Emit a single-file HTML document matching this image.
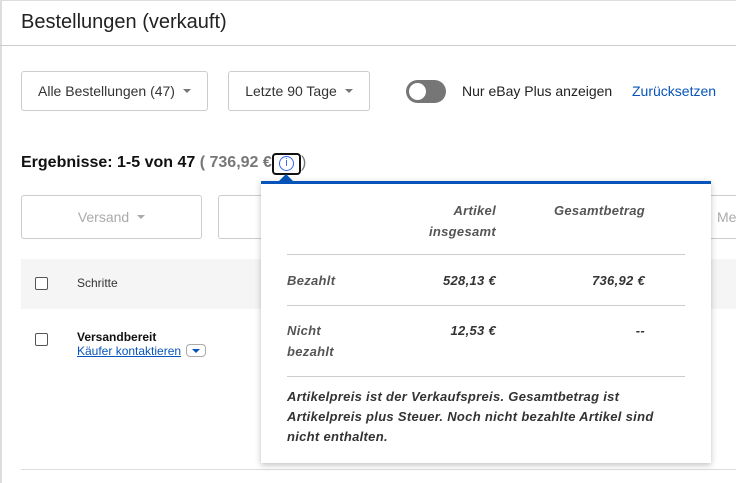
<!DOCTYPE html>
<html><head><meta charset="utf-8"><style>
*{box-sizing:border-box;margin:0;padding:0}
body{width:736px;height:483px;overflow:hidden;background:#fff;font-family:"Liberation Sans",Arial,sans-serif;color:#111;position:relative}
.a{position:absolute}
.btn{position:absolute;border:1px solid #ccc;border-radius:3px;background:#fff;font-size:14px;color:#333;display:flex;align-items:center;justify-content:center}
.car{display:inline-block;width:0;height:0;border-left:4px solid transparent;border-right:4px solid transparent;border-top:4px solid #777;margin-left:8px}
.cb{position:absolute;width:13px;height:13px;border:1px solid #555;border-radius:2px;background:#fff}
.pop{position:absolute;left:261px;top:181px;width:450px;height:282px;background:#fff;border-top:3px solid #0654ba;box-shadow:0 2px 6px rgba(0,0,0,.25)}
.pop .t{position:absolute;font-style:italic;font-weight:bold;font-size:13px;color:#555;line-height:21px;letter-spacing:0.3px}
.pop .d{color:#333}
.hr{position:absolute;left:26px;width:398px;height:1px;background:#ccc}
</style></head><body>
<div class="a" style="left:0;top:0;width:736px;height:1px;background:#ddd"></div>
<div class="a" style="left:0;top:0;width:2px;height:483px;background:#ddd"></div>
<div class="a" style="left:21px;top:11px;font-size:20px;color:#222">Bestellungen (verkauft)</div>
<div class="a" style="left:0;top:45px;width:736px;height:1px;background:#ccc"></div>
<div class="btn" style="left:21px;top:71px;width:187px;height:40px">Alle Bestellungen (47)<span class="car"></span></div>
<div class="btn" style="left:228px;top:71px;width:142px;height:40px">Letzte 90 Tage<span class="car"></span></div>
<div class="a" style="left:406px;top:80px;width:40px;height:23px;border-radius:12px;background:#767676"></div>
<div class="a" style="left:409px;top:83px;width:17px;height:17px;border-radius:50%;background:#fff"></div>
<div class="a" style="left:462px;top:83px;font-size:14px;color:#222">Nur eBay Plus anzeigen</div>
<div class="a" style="left:632px;top:83px;font-size:14px;color:#0654ba">Zurücksetzen</div>
<div class="a" style="left:21px;top:154px;font-size:16px;font-weight:bold;color:#111;white-space:nowrap">Ergebnisse: 1-5 von 47 <span style="color:#777">( 736,92 €</span></div>
<div class="a" style="left:272px;top:153px;width:29px;height:22px;border:2px solid #111;border-radius:4px;background:#fff"></div>
<div class="a" style="left:279px;top:156px;width:15px;height:15px;border:1px solid #3665f3;border-radius:50%;color:#3665f3;font-size:11px;text-align:center;line-height:13px">i</div>
<div class="a" style="left:301px;top:154px;font-size:16px;color:#777">)</div>
<div class="a" style="left:278px;top:174px;width:0;height:0;border-left:8px solid transparent;border-right:8px solid transparent;border-bottom:8px solid #0654ba"></div>
<div class="btn" style="left:21px;top:195px;width:181px;height:44px;color:#aaa">Versand<span class="car" style="border-top-color:#aaa"></span></div>
<div class="btn" style="left:218px;top:195px;width:100px;height:44px"></div>
<div class="btn" style="left:700px;top:195px;width:60px;height:44px;color:#aaa;justify-content:flex-start;padding-left:16px">Me</div>
<div class="a" style="left:21px;top:259px;width:715px;height:50px;background:#f5f5f5"></div>
<div class="cb" style="left:35px;top:277px"></div>
<div class="a" style="left:77px;top:276px;font-size:12px;color:#333">Schritte</div>
<div class="cb" style="left:35px;top:333px"></div>
<div class="a" style="left:77px;top:330px;font-size:12px;font-weight:bold">Versandbereit</div>
<div class="a" style="left:77px;top:344px;font-size:12px;color:#0654ba;text-decoration:underline">Käufer kontaktieren</div>
<div class="a" style="left:186px;top:344px;width:20px;height:13px;border:1px solid #aaa;border-radius:4px"></div>
<div class="a" style="left:192px;top:349px;width:0;height:0;border-left:4px solid transparent;border-right:4px solid transparent;border-top:4px solid #0654ba"></div>
<div class="a" style="left:21px;top:469px;width:715px;height:1px;background:#ddd"></div>
<div class="pop">
<div class="t" style="left:140px;width:95px;text-align:right;top:16px">Artikel<br>insgesamt</div>
<div class="t" style="left:260px;width:124px;text-align:right;top:16px">Gesamtbetrag</div>
<div class="hr" style="top:70px"></div>
<div class="t" style="left:26px;top:86px">Bezahlt</div>
<div class="t d" style="left:140px;width:95px;text-align:right;top:86px">528,13 €</div>
<div class="t d" style="left:260px;width:124px;text-align:right;top:86px">736,92 €</div>
<div class="hr" style="top:121px"></div>
<div class="t" style="left:26px;top:136px">Nicht<br>bezahlt</div>
<div class="t d" style="left:140px;width:95px;text-align:right;top:136px">12,53 €</div>
<div class="t d" style="left:260px;width:124px;text-align:right;top:136px">--</div>
<div class="hr" style="top:192px"></div>
<div class="t d" style="left:26px;top:203px;width:385px;line-height:20px">Artikelpreis ist der Verkaufspreis. Gesamtbetrag ist Artikelpreis plus Steuer. Noch nicht bezahlte Artikel sind nicht enthalten.</div>
</div>
</body></html>
